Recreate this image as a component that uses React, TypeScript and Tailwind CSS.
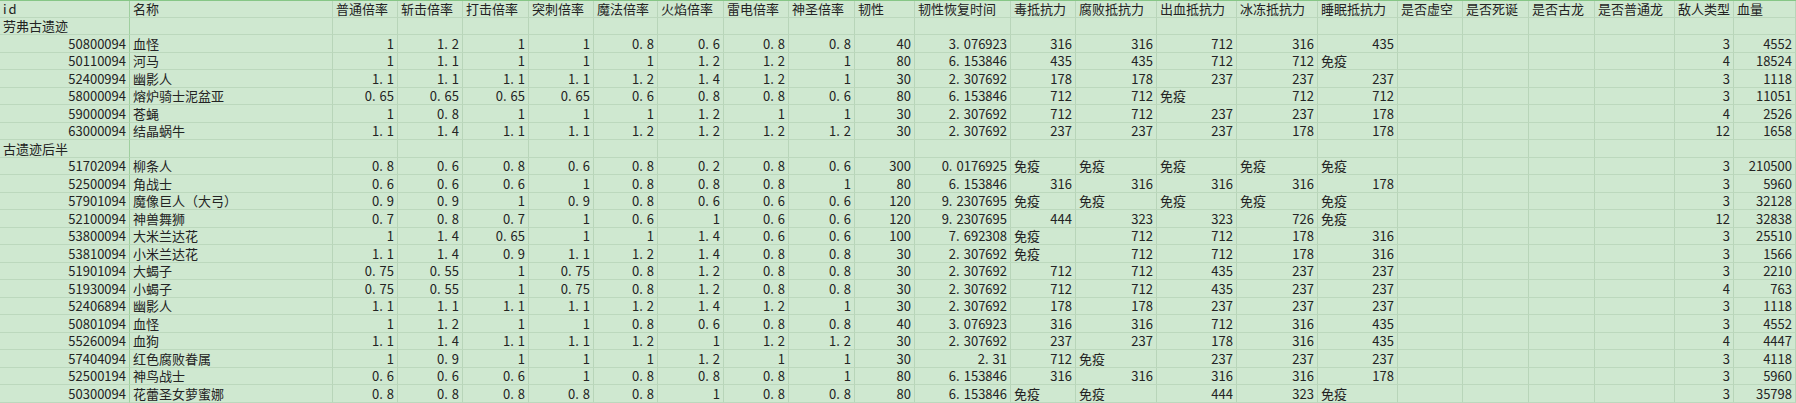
import React from "react";

const GRID =
  "grid grid-cols-[130px_203px_65px_65px_66px_65px_64px_66px_65px_66px_60px_96px_65px_81px_80px_81px_80px_65px_66px_66px_80px_59px_62px]";

const HEADERS = [
  "id", "名称", "普通倍率", "斩击倍率", "打击倍率", "突刺倍率", "魔法倍率", "火焰倍率", "雷电倍率", "神圣倍率",
  "韧性", "韧性恢复时间", "毒抵抗力", "腐败抵抗力", "出血抵抗力", "冰冻抵抗力", "睡眠抵抗力",
  "是否虚空", "是否死诞", "是否古龙", "是否普通龙", "敌人类型", "血量",
];

type Row = string[];
const M = "免疫";

const G1: Row[] = [
  ["50800094", "血怪", "1", "1.2", "1", "1", "0.8", "0.6", "0.8", "0.8", "40", "3.076923", "316", "316", "712", "316", "435", "", "", "", "", "3", "4552"],
  ["50110094", "河马", "1", "1.1", "1", "1", "1", "1.2", "1.2", "1", "80", "6.153846", "435", "435", "712", "712", M, "", "", "", "", "4", "18524"],
  ["52400994", "幽影人", "1.1", "1.1", "1.1", "1.1", "1.2", "1.4", "1.2", "1", "30", "2.307692", "178", "178", "237", "237", "237", "", "", "", "", "3", "1118"],
  ["58000094", "熔炉骑士泥盆亚", "0.65", "0.65", "0.65", "0.65", "0.6", "0.8", "0.8", "0.6", "80", "6.153846", "712", "712", M, "712", "712", "", "", "", "", "3", "11051"],
  ["59000094", "苍蝇", "1", "0.8", "1", "1", "1", "1.2", "1", "1", "30", "2.307692", "712", "712", "237", "237", "178", "", "", "", "", "4", "2526"],
  ["63000094", "结晶蜗牛", "1.1", "1.4", "1.1", "1.1", "1.2", "1.2", "1.2", "1.2", "30", "2.307692", "237", "237", "237", "178", "178", "", "", "", "", "12", "1658"],
];

const G2: Row[] = [
  ["51702094", "柳条人", "0.8", "0.6", "0.8", "0.6", "0.8", "0.2", "0.8", "0.6", "300", "0.0176925", M, M, M, M, M, "", "", "", "", "3", "210500"],
  ["52500094", "角战士", "0.6", "0.6", "0.6", "1", "0.8", "0.8", "0.8", "1", "80", "6.153846", "316", "316", "316", "316", "178", "", "", "", "", "3", "5960"],
  ["57901094", "魔像巨人（大弓）", "0.9", "0.9", "1", "0.9", "0.8", "0.6", "0.6", "0.6", "120", "9.2307695", M, M, M, M, M, "", "", "", "", "3", "32128"],
  ["52100094", "神兽舞狮", "0.7", "0.8", "0.7", "1", "0.6", "1", "0.6", "0.6", "120", "9.2307695", "444", "323", "323", "726", M, "", "", "", "", "12", "32838"],
  ["53800094", "大米兰达花", "1", "1.4", "0.65", "1", "1", "1.4", "0.6", "0.6", "100", "7.692308", M, "712", "712", "178", "316", "", "", "", "", "3", "25510"],
  ["53810094", "小米兰达花", "1.1", "1.4", "0.9", "1.1", "1.2", "1.4", "0.8", "0.8", "30", "2.307692", M, "712", "712", "178", "316", "", "", "", "", "3", "1566"],
  ["51901094", "大蝎子", "0.75", "0.55", "1", "0.75", "0.8", "1.2", "0.8", "0.8", "30", "2.307692", "712", "712", "435", "237", "237", "", "", "", "", "3", "2210"],
  ["51930094", "小蝎子", "0.75", "0.55", "1", "0.75", "0.8", "1.2", "0.8", "0.8", "30", "2.307692", "712", "712", "435", "237", "237", "", "", "", "", "4", "763"],
  ["52406894", "幽影人", "1.1", "1.1", "1.1", "1.1", "1.2", "1.4", "1.2", "1", "30", "2.307692", "178", "178", "237", "237", "237", "", "", "", "", "3", "1118"],
  ["50801094", "血怪", "1", "1.2", "1", "1", "0.8", "0.6", "0.8", "0.8", "40", "3.076923", "316", "316", "712", "316", "435", "", "", "", "", "3", "4552"],
  ["55260094", "血狗", "1.1", "1.4", "1.1", "1.1", "1.2", "1", "1.2", "1.2", "30", "2.307692", "237", "237", "178", "316", "435", "", "", "", "", "4", "4447"],
  ["57404094", "红色腐败眷属", "1", "0.9", "1", "1", "1", "1.2", "1", "1", "30", "2.31", "712", M, "237", "237", "237", "", "", "", "", "3", "4118"],
  ["52500194", "神鸟战士", "0.6", "0.6", "0.6", "1", "0.8", "0.8", "0.8", "1", "80", "6.153846", "316", "316", "316", "316", "178", "", "", "", "", "3", "5960"],
  ["50300094", "花蕾圣女萝蜜娜", "0.8", "0.8", "0.8", "0.8", "0.8", "1", "0.8", "0.8", "80", "6.153846", M, M, "444", "323", M, "", "", "", "", "3", "35798"],
];

const isNum = (s: string) => /^[0-9.]+$/.test(s);

function NumText({ v }: { v: string }) {
  const i = v.indexOf(".");
  if (i < 0) return <>{v}</>;
  return (
    <>
      {v.slice(0, i)}
      <span className="pr-[4px]">.</span>
      {v.slice(i + 1)}
    </>
  );
}

function Cell({ v, idx }: { v: string; idx: number }) {
  const num = isNum(v);
  const border = idx === 0 ? "border-r-[#9fcf9f]" : "border-r-[#b8d5b9]";
  return (
    <div
      className={`h-[17.5px] flex items-center overflow-visible whitespace-nowrap border-r border-b border-b-[#bcd8bd] ${border} ${
        num ? "justify-end pr-[3px]" : "justify-start pl-[3px]"
      }`}
    >
      {num ? <NumText v={v} /> : v}
    </div>
  );
}

function DataRow({ r }: { r: Row }) {
  return (
    <div className={GRID}>
      {r.map((v, i) => (
        <Cell key={i} v={v} idx={i} />
      ))}
    </div>
  );
}

function GroupRow({ title }: { title: string }) {
  const r = [title, ...Array(22).fill("")];
  return <DataRow r={r} />;
}

export default function App() {
  return (
    <div
      className="w-[1796px] h-[403px] overflow-hidden bg-[#cfe8d0] text-[13px] text-[#232323] leading-none"
      style={{ fontFamily: '"Noto Sans CJK SC", "Noto Sans", sans-serif' }}
    >
      <div className={`${GRID} border-t border-t-[#86c686]`}>
        {HEADERS.map((h, i) => (
          <div
            key={i}
            className={`h-[16.5px] flex items-center pl-[3px] whitespace-nowrap border-r border-b border-b-[#bcd8bd] ${
              i === 0 ? "border-r-[#9fcf9f] tracking-[2px]" : "border-r-[#b8d5b9]"
            }`}
          >
            {h}
          </div>
        ))}
      </div>
      <GroupRow title="劳弗古遗迹" />
      {G1.map((r, i) => (
        <DataRow key={i} r={r} />
      ))}
      <GroupRow title="古遗迹后半" />
      {G2.map((r, i) => (
        <DataRow key={i} r={r} />
      ))}
    </div>
  );
}
